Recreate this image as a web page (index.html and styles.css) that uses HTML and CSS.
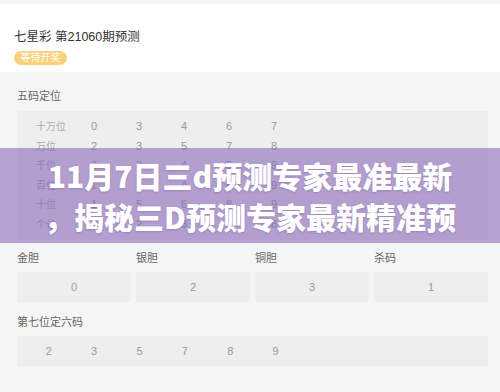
FILE: index.html
```html
<!DOCTYPE html>
<html lang="zh-CN">
<head>
<meta charset="utf-8">
<title>七星彩 第21060期预测</title>
<link rel="stylesheet" href="styles.css">
</head>
<body>
<div class="page">
  <div class="card">
    <div class="title">七星彩 第21060期预测</div>
    <span class="badge">等待开奖</span>
  </div>

  <div class="section">
    <div class="label">五码定位</div>
    <div class="table">
      <div class="row"><span class="pos">十万位</span><span>0</span><span>3</span><span>4</span><span>6</span><span>7</span></div>
      <div class="row"><span class="pos">万位</span><span>2</span><span>3</span><span>5</span><span>7</span><span>8</span></div>
      <div class="row"><span class="pos">千位</span><span>2</span><span>3</span><span>4</span><span>5</span><span>9</span></div>
      <div class="row"><span class="pos">百位</span><span>1</span><span>2</span><span>4</span><span>6</span><span>9</span></div>
      <div class="row"><span class="pos">十位</span><span>1</span><span>5</span><span>6</span><span>8</span><span>9</span></div>
      <div class="row"><span class="pos">个位</span><span>0</span><span>2</span><span>3</span><span>6</span><span>8</span></div>
    </div>

    <div class="grid4">
      <div class="cell"><div class="label">金胆</div><div class="box">0</div></div>
      <div class="cell"><div class="label">银胆</div><div class="box">2</div></div>
      <div class="cell"><div class="label">铜胆</div><div class="box">3</div></div>
      <div class="cell"><div class="label">杀码</div><div class="box">1</div></div>
    </div>

    <div class="label label-seven">第七位定六码</div>
    <div class="six">
      <span>2</span><span>3</span><span>5</span><span>7</span><span>8</span><span>9</span>
    </div>
  </div>

  <div class="overlay">
    <h1 class="headline"><span class="line">11月7日三d预测专家最准最新</span><span class="line">，揭秘三D预测专家最新精准预</span></h1>
  </div>
</div>
</body>
</html>
```

FILE: styles.css
```css
* { box-sizing: border-box; }
html, body {
  margin: 0;
  padding: 0;
  background: #f5f5f5;
  font-family: "Liberation Sans", "Noto Sans CJK SC", sans-serif;
}
.page {
  position: relative;
  width: 500px;
  height: 392px;
  padding-top: 4px;
  overflow: hidden;
}
.card {
  background: #fff;
  height: 68px;
  padding: 23px 14px 0;
}
.title {
  font-size: 12.5px;
  line-height: 20px;
  color: #333;
}
.badge {
  display: inline-block;
  margin-top: 2px;
  width: 53px;
  height: 14px;
  line-height: 14px;
  border-radius: 7px;
  background: #f8d27c;
  color: #fff;
  font-size: 10px;
  text-align: center;
}
.section {
  padding: 14px 12px 0 17px;
}
.label {
  font-size: 11px;
  line-height: 20px;
  color: #666;
}
.table {
  margin-top: 5px;
  background: #eeeeee;
  padding: 6px 0 6px 19px;
}
.row {
  display: grid;
  grid-template-columns: 55px repeat(5, 45px);
  height: 19.5px;
  line-height: 19.5px;
  font-size: 11px;
  color: #999;
}
.row .pos { color: #aaa; font-size: 10px; }
.grid4 {
  display: grid;
  grid-template-columns: repeat(4, 1fr);
  column-gap: 5px;
  margin-top: 8px;
}
.box {
  margin-top: 4px;
  height: 30px;
  line-height: 30px;
  background: #eeeeee;
  text-align: center;
  font-size: 11px;
  color: #999;
}
.label-seven { margin-top: 10px; }
.six {
  margin-top: 4px;
  height: 30px;
  background: #eeeeee;
  display: flex;
  padding-left: 9px;
  font-size: 11px;
  line-height: 30px;
  color: #999;
}
.six span {
  width: 45.4px;
  text-align: center;
}
.overlay {
  position: absolute;
  left: 0;
  top: 148px;
  width: 500px;
  height: 95px;
  background: rgba(135, 100, 185, 0.58);
  display: flex;
  align-items: center;
  justify-content: center;
}
.headline {
  margin: 0;
  font-family: "Noto Sans CJK SC", sans-serif;
  font-weight: 900;
  font-size: 30px;
  line-height: 41px;
  color: #fff;
  text-align: center;
  text-shadow: 0 1px 2px rgba(60, 30, 90, 0.2);
}
.headline .line { display: block; }
```
